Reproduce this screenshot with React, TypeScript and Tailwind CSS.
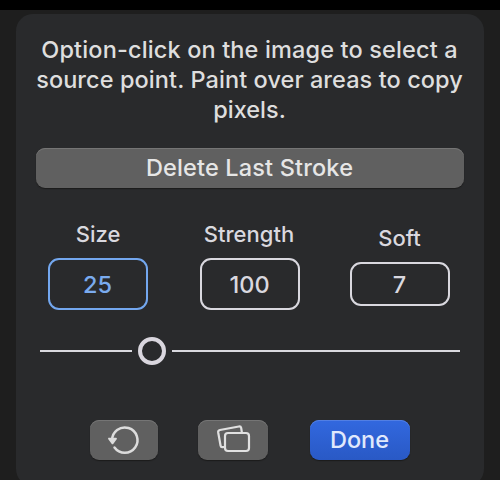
import React from "react";

function Field({ label, value, box, color = "border-[#d9d8df] text-[#d9d8df]", tracking = "" }: {
  label: string; value: string; box: string; color?: string; tracking?: string;
}) {
  return (
    <div className="flex w-[100px] flex-col items-center">
      <div className={`mb-2 h-[30px] whitespace-nowrap text-[22px] leading-[29px] text-[#d9d8df] ${tracking}`}>{label}</div>
      <div className={`flex w-[100px] items-center justify-center rounded-[11px] border-2 pr-[1px] pt-[1px] text-[23.5px] ${box} ${color}`}>{value}</div>
    </div>
  );
}

const button = "flex h-10 items-center justify-center rounded-[9px] bg-[#606060] shadow-[inset_0_1px_0_#757575,0_1px_1px_#1b1b1b]";

export default function App() {
  return (
    <div className="h-[480px] w-[500px] overflow-hidden border-t-[10px] border-black bg-[#1e1e1e] px-4 pt-1 font-['Inter',sans-serif] font-medium">
      <div className="flex h-[472px] flex-col rounded-[17px] bg-[#292a2c] px-5 pt-[21px]">
        <div className="flex h-[90px] flex-col items-center whitespace-nowrap text-[23.5px] leading-[30px] text-[#dedede]">
          <span className="pr-[1px] tracking-[0.14px]">Option-click on the image to select a</span>
          <span className="pr-[1px] tracking-[0.08px]">source point. Paint over areas to copy</span>
          <span className="pr-[1px]">pixels.</span>
        </div>
        <button className={`${button} mt-[23px] w-full pr-[1px] text-[23.5px] tracking-[0.16px] text-[#e6e6e6]`}>Delete Last Stroke</button>

        <div className="mt-8 flex h-[90px] items-center pl-3">
          <Field label="Size" value="25" box="h-[52px]" color="border-[#73a7ef] text-[#7aabef]" />
          <div className="ml-[52px]"><Field label="Strength" value="100" box="h-[52px]" tracking="pr-[2px]" /></div>
          <div className="ml-[50px]"><Field label="Soft" value="7" box="h-[44px]" tracking="pr-[1px]" /></div>
        </div>

        <div className="mt-[27px] flex h-7 items-center px-1">
          <div className="h-[2px] w-[92px] bg-[#d9d9df]" />
          <div className="ml-[6px] mr-[6px] h-7 w-7 rounded-full border-4 border-[#d9d6de]" />
          <div className="h-[2px] flex-1 bg-[#d9d9df]" />
        </div>

        <div className="mt-[55px] flex pl-[54px]">
          <button className={`${button} w-[68px]`} aria-label="Reset">
            <svg width="68" height="40" viewBox="0 0 68 40" fill="none">
              <path d="M22.1 20.5A12.7 12.7 0 1 1 24.5 27.6" stroke="#dcdcdc" strokeWidth="2.5" strokeLinecap="round" />
              <path d="M19 18.6H26L22.5 23.4Z" fill="#dcdcdc" stroke="#dcdcdc" strokeWidth="1.8" strokeLinejoin="round" />
            </svg>
          </button>
          <button className={`${button} ml-10 w-[70px]`} aria-label="Compare">
            <svg width="70" height="40" viewBox="0 0 70 40" fill="none" stroke="#e1e1e1" strokeWidth="2.2">
              <path d="M27 27L24.3 27.2Q22.9 27.3 22.6 25.7L20.2 12.5Q19.9 10.4 21.9 10L40.9 6.5Q42.8 6.2 43.2 8L43.8 12" strokeLinecap="round" />
              <rect x="27" y="13" width="24" height="18" rx="3" />
            </svg>
          </button>
          <button className="ml-[42px] flex h-10 w-[100px] items-center justify-center rounded-[9px] bg-linear-to-b from-[#3268df] to-[#2959c5] pr-[1px] text-[23.5px] text-[#e0e9fc] shadow-[inset_0_1px_0_#527fe3,0_1px_1px_#1b1b1b]">Done</button>
        </div>
      </div>
    </div>
  );
}
